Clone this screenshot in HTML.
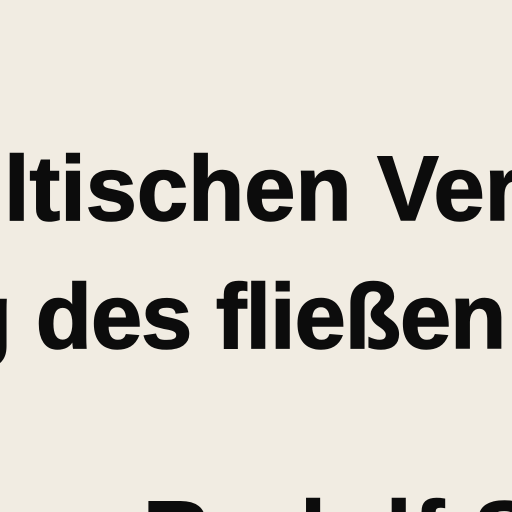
<!DOCTYPE html>
<html><head><style>
html,body{margin:0;padding:0;width:512px;height:512px;overflow:hidden}
body{background:#f1ece2;position:relative;font-family:"Liberation Sans",Arial,sans-serif;font-weight:bold;color:#0c0c0c}
.t{position:absolute;white-space:nowrap;font-size:92px;line-height:1;-webkit-text-stroke:1.5px #0c0c0c}
</style></head><body>
<div class="t" style="left:4px;top:143px;letter-spacing:0px">ltischen Ver</div>
<div class="t" style="left:-44px;top:271px;letter-spacing:-1px">g des fließen</div>
<div class="t" style="left:-20px;top:488px">l</div>
<div class="t" style="left:143px;top:488px;letter-spacing:2px">Rudolf Sch</div>
</body></html>
